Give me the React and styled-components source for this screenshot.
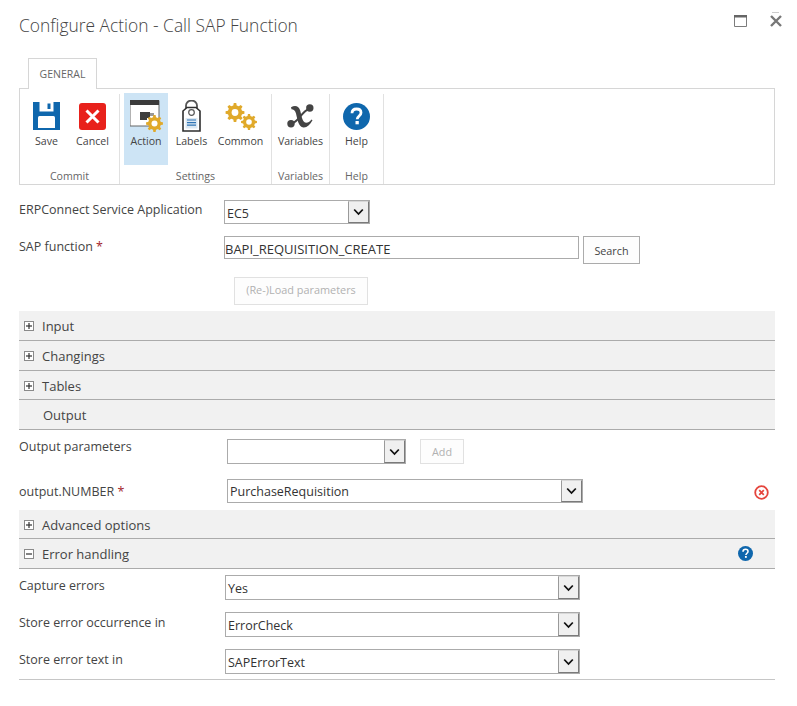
import React from 'react';
import styled, { createGlobalStyle } from 'styled-components';

const Global = createGlobalStyle`
  html, body { margin: 0; padding: 0; background: #fff; }
  body { font-family: "Open Sans", "Noto Sans", "Liberation Sans", sans-serif; color: #444; font-size: 12.5px; }
`;

const Page = styled.div`
  width: 756px;
  height: 706px;
  padding-left: 19px;
`;
const Header = styled.header`
  height: 58px;
  display: flex;
  justify-content: space-between;
  align-items: flex-start;
  margin-right: -7px;
`;
const Title = styled.h1`
  margin: 12px 0 0;
  font-size: 17.4px;
  line-height: 26px;
  font-weight: 300;
  color: #444;
`;
const WindowControls = styled.div`
  display: flex;
  align-items: flex-end;
  gap: 23px;
  margin-top: 12px;
`;
const TabStrip = styled.div`
  height: 30px;
  padding-left: 9px;
  display: flex;
`;
const Tab = styled.div`
  width: 67px;
  height: 30px;
  border: 1px solid #d6d6d6;
  border-bottom: 0;
  background: #fff;
  font-size: 10.5px;
  line-height: 30px;
  text-align: center;
  color: #666;
  position: relative;
  z-index: 1;
`;
const Ribbon = styled.div`
  height: 95px;
  border: 1px solid #d6d6d6;
  display: flex;
`;
const Group = styled.section`
  width: ${p => p.$w}px;
  margin-top: 5px;
  border-right: 1px solid #e1e1e1;
  display: flex;
  flex-direction: column;
  box-sizing: border-box;
`;
const GroupButtons = styled.div`
  height: 72px;
  margin-top: -1px;
  padding-left: ${p => p.$pad || 0}px;
  display: flex;
`;
const GroupLabel = styled.div`
  font-size: 10.6px;
  line-height: 15px;
  margin-top: 4px;
  text-align: center;
  color: #666;
`;
const RibbonButton = styled.div`
  width: ${p => p.$w}px;
  height: 72px;
  background: ${p => (p.$active ? '#cde4f5' : 'transparent')};
  display: flex;
  flex-direction: column;
  align-items: center;
  flex-shrink: 0;
`;
const IconSlot = styled.div`
  height: 40px;
  display: flex;
  align-items: center;
  justify-content: center;
  margin-top: 3px;
`;
const RibbonText = styled.div`
  font-size: 10.6px;
  line-height: 15px;
  margin-top: -2px;
  color: #444;
`;

const Row = styled.div`
  display: flex;
  align-items: flex-start;
  height: ${p => p.$h}px;
  margin-top: ${p => p.$mt || 0}px;
  padding-left: ${p => p.$pad || 0}px;
`;
const Label = styled.div`
  width: ${p => p.$w}px;
  flex-shrink: 0;
  line-height: 18px;
  margin-top: ${p => p.$top || 0}px;
  color: #444;
`;
const Req = styled.span`
  color: #a4262c;
`;
const SelectBox = styled.div`
  box-sizing: border-box;
  width: ${p => p.$w}px;
  height: ${p => p.$h}px;
  border: 1px solid #ababab;
  background: #fff;
  display: flex;
  align-items: stretch;
  flex-shrink: 0;
`;
const SelectValue = styled.div`
  flex: 1;
  padding-left: ${p => p.$pad ?? 2}px;
  font-size: 12.5px;
  line-height: ${p => p.$lh}px;
  color: #333;
`;
const SelectArrow = styled.div`
  width: 19px;
  border: 1px solid #8a8a8a;
  border-color: #d8d8d8 #7a7a7a #7a7a7a #9a9a9a;
  background: #f0f0f0;
  display: flex;
  align-items: center;
  justify-content: center;
`;
const TextInput = styled.div`
  box-sizing: border-box;
  width: 355px;
  height: 23px;
  border: 1px solid #ababab;
  line-height: 25px;
  font-size: 13px;
  color: #333;
`;
const Button = styled.div`
  box-sizing: border-box;
  width: ${p => p.$w}px;
  height: ${p => p.$h}px;
  border: 1px solid ${p => (p.$disabled ? '#e1e1e1' : '#ababab')};
  background: #fdfdfd;
  color: ${p => (p.$disabled ? '#b1b1b1' : '#444')};
  font-size: ${p => p.$fs || 10.8}px;
  line-height: ${p => p.$h - 2 + (p.$dy || 0)}px;
  text-align: center;
  margin-left: ${p => p.$ml || 0}px;
  flex-shrink: 0;
`;
const Section = styled.div`
  box-sizing: border-box;
  height: ${p => p.$h || 30}px;
  background: #f1f1f1;
  border-bottom: 1px solid #ababab;
  display: flex;
  align-items: center;
  padding-top: ${p => (p.$h === 29 ? 1 : 0)}px;
  padding-left: ${p => p.$pad || 5}px;
  padding-right: 22px;
  font-size: 13px;
  color: #444;
`;
const SectionTitle = styled.div`
  flex: 1;
  margin-left: 8px;
`;
const Toggle = styled.span`
  box-sizing: border-box;
  width: 10px;
  height: 10px;
  border: 1px solid #8a8a8a;
  background: #fff;
  position: relative;
  flex-shrink: 0;
  &::before {
    content: '';
    position: absolute;
    left: 1px;
    right: 1px;
    top: 3px;
    height: 2px;
    background: #333;
    transform: scaleY(.6);
  }
  &::after {
    content: '';
    position: absolute;
    top: 1px;
    bottom: 1px;
    left: 3px;
    width: 2px;
    background: #333;
    transform: scaleX(.6);
    display: ${p => (p.$open ? 'none' : 'block')};
  }
`;
const Spacer = styled.div`
  flex: 1;
`;
const RemoveSlot = styled.div`
  margin: 6px 6px 0 0;
`;
const BottomRule = styled.div`
  height: 1px;
  background: #c6c6c6;
`;

const Chevron = () => (
  <svg width="11" height="8" viewBox="0 0 11 8"><path d="M1.2 1.5 5.5 6 9.8 1.5" fill="none" stroke="#111" strokeWidth="1.8" /></svg>
);

const Select = ({ w, h, value, pad, lh }) => (
  <SelectBox $w={w} $h={h}>
    <SelectValue $pad={pad} $lh={lh || h}>{value}</SelectValue>
    <SelectArrow><Chevron /></SelectArrow>
  </SelectBox>
);

const Sec = ({ title, open, none, h, children }) => (
  <Section $h={h} $pad={none ? 16 : 5}>
    {!none && <Toggle $open={open} />}
    <SectionTitle>{title}</SectionTitle>
    {children}
  </Section>
);

const gearPath = (cx, cy, ro, ri, n) => {
  const pts = [];
  const step = (Math.PI * 2) / n;
  for (let i = 0; i < n; i++) {
    const a = i * step;
    [[-0.3, ri], [-0.17, ro], [0.17, ro], [0.3, ri]].forEach(([o, r]) => {
      const t = a + o * step;
      pts.push(`${(cx + r * Math.cos(t)).toFixed(2)} ${(cy + r * Math.sin(t)).toFixed(2)}`);
    });
  }
  return `M${pts.join('L')}Z`;
};
const Gear = ({ cx, cy, r, hole }) => (
  <g>
    <path d={gearPath(cx, cy, r, r * 0.76, 8)} fill="#e0a92a" />
    <circle cx={cx} cy={cy} r={hole} fill="#fff" />
  </g>
);

const SaveIcon = () => (
  <svg width="27" height="28" viewBox="0 0 27 28">
    <path d="M0 0H27V28H0Z" fill="#0f67ad" />
    <path d="M6.5 0H20.5V9.5H6.5Z" fill="#fff" />
    <path d="M14.5 1.5H17.5V7H14.5Z" fill="#0f67ad" />
    <path d="M5 15.5Q5 14 6.5 14H20.5Q22 14 22 15.5V26H5Z" fill="#fff" />
  </svg>
);
const CancelIcon = () => (
  <svg width="27" height="27" viewBox="0 0 27 27">
    <rect width="27" height="27" rx="3" fill="#e8211b" />
    <path d="M7.5 7.5 19.5 19.5M19.5 7.5 7.5 19.5" stroke="#fff" strokeWidth="3" />
  </svg>
);
const ActionIcon = () => (
  <svg width="33" height="32" viewBox="0 0 33 32">
    <path d="M0 .5H29V26H0Z" fill="#fff" stroke="#666" strokeWidth="1" />
    <path d="M0 0H29V5H0Z" fill="#3b3b3b" />
    <path d="M10 12H20V18H17V20H10Z" fill="#3d3d3d" />
    <path d="M20 13h4v3h-4z" fill="#999" />
    <Gear cx={24.5} cy={23.5} r={8.5} hole={3} />
  </svg>
);
const LabelsIcon = () => (
  <svg width="19" height="32" viewBox="0 0 19 32">
    <path d="M4 10V5.5a5.5 5 0 0 1 11 0V10" fill="none" stroke="#555" strokeWidth="1.8" />
    <path d="M1 31V11L5 7.5H14L18 11V31Z" fill="#fff" stroke="#2e2e2e" strokeWidth="1.6" />
    <circle cx="9.5" cy="12.5" r="2.8" fill="none" stroke="#555" strokeWidth="1.2" />
    <path d="M3.5 18H15.5V28.5H3.5Z" fill="#dce8f2" />
    <path d="M5 20H14M5 22.6H14M5 25.2H14" stroke="#2f74b5" strokeWidth="1.2" />
  </svg>
);
const CommonIcon = () => (
  <svg width="32" height="27" viewBox="0 0 32 27">
    <Gear cx={10} cy={9.5} r={9.5} hole={3.4} />
    <Gear cx={24} cy={19} r={8} hole={2.8} />
  </svg>
);
const VariableIcon = () => (
  <svg width="27" height="24" viewBox="0 0 27 24">
    <path d="M4 3.2C8 1 11.5 1.8 13 6C14.5 10.5 15 18.5 19 18.8C21 18.9 22.5 18 24.5 15.5L25.5 16.3C23 21 20 23.6 16.5 23.4C11.5 23.1 10.5 16 9 9.5C8.2 6.5 6.5 5.2 4.5 5.2Z" fill="#444" />
    <path d="M5 19.5C11 18.5 15 7 22 5" fill="none" stroke="#444" strokeWidth="2" />
    <circle cx="22.8" cy="4" r="3.7" fill="#444" />
    <circle cx="4" cy="19.8" r="3.7" fill="#444" />
  </svg>
);
const HelpIcon = ({ size = 27 }) => (
  <svg width={size} height={size} viewBox="0 0 27 27">
    <circle cx="13.5" cy="13.5" r="13.5" fill="#0f67ad" />
    <path d="M9 10.2C9 7.5 11 6 13.6 6C16.3 6 18 7.6 18 9.8C18 13 14.2 13 14.2 16.3" fill="none" stroke="#fff" strokeWidth="2.8" />
    <rect x="12.5" y="18" width="3.3" height="3.3" fill="#fff" />
  </svg>
);
const RemoveIcon = () => (
  <svg width="15" height="15" viewBox="0 0 15 15">
    <circle cx="7.5" cy="7.5" r="6.3" fill="#fff" stroke="#e5453d" strokeWidth="1.8" />
    <path d="M5.2 5.2 9.8 9.8M9.8 5.2 5.2 9.8" stroke="#e5453d" strokeWidth="1.7" />
  </svg>
);
const MaximizeIcon = () => (
  <svg width="13" height="12" viewBox="0 0 13 12">
    <path d="M.5.5H12.5V11.5H.5Z" fill="#fff" stroke="#7c7c7c" />
    <path d="M0 0H13V2.5H0Z" fill="#666" />
  </svg>
);
const CloseIcon = () => (
  <svg width="12" height="15" viewBox="0 0 12 15">
    <path d="M2 .5H9" stroke="#ccc" />
    <path d="M1 4 11 14M11 4 1 14" stroke="#777" strokeWidth="2.4" />
  </svg>
);

export default function App() {
  return (
    <>
      <Global />
      <Page>
        <Header>
          <Title>Configure Action - Call SAP Function</Title>
          <WindowControls>
            <MaximizeIcon />
            <CloseIcon />
          </WindowControls>
        </Header>
        <TabStrip><Tab>GENERAL</Tab></TabStrip>
        <Ribbon>
          <Group $w={100}>
            <GroupButtons $pad={4}>
              <RibbonButton $w={45}><IconSlot><SaveIcon /></IconSlot><RibbonText>Save</RibbonText></RibbonButton>
              <RibbonButton $w={47}><IconSlot><CancelIcon /></IconSlot><RibbonText>Cancel</RibbonText></RibbonButton>
            </GroupButtons>
            <GroupLabel>Commit</GroupLabel>
          </Group>
          <Group $w={152}>
            <GroupButtons $pad={4}>
              <RibbonButton $w={44} $active><IconSlot><ActionIcon /></IconSlot><RibbonText>Action</RibbonText></RibbonButton>
              <RibbonButton $w={47}><IconSlot><LabelsIcon /></IconSlot><RibbonText>Labels</RibbonText></RibbonButton>
              <RibbonButton $w={51}><IconSlot><CommonIcon /></IconSlot><RibbonText>Common</RibbonText></RibbonButton>
            </GroupButtons>
            <GroupLabel>Settings</GroupLabel>
          </Group>
          <Group $w={58}>
            <GroupButtons>
              <RibbonButton $w={57}><IconSlot><VariableIcon /></IconSlot><RibbonText>Variables</RibbonText></RibbonButton>
            </GroupButtons>
            <GroupLabel>Variables</GroupLabel>
          </Group>
          <Group $w={54}>
            <GroupButtons>
              <RibbonButton $w={53}><IconSlot><HelpIcon /></IconSlot><RibbonText>Help</RibbonText></RibbonButton>
            </GroupButtons>
            <GroupLabel>Help</GroupLabel>
          </Group>
        </Ribbon>

        <Row $h={36} $mt={15}>
          <Label $w={205} $top={1}>ERPConnect Service Application</Label>
          <Select w={146} h={24} value="EC5" lh={25} />
        </Row>
        <Row $h={41}>
          <Label $w={205} $top={2}>SAP function <Req>*</Req></Label>
          <TextInput>BAPI_REQUISITION_CREATE</TextInput>
          <Button $w={57} $h={28} $ml={4} $dy={2}>Search</Button>
        </Row>
        <Row $h={34} $pad={215}>
          <Button $w={134} $h={28} $fs={10.9} $dy={-2} $disabled>(Re-)Load parameters</Button>
        </Row>

        <Sec title="Input" />
        <Sec title="Changings" />
        <Sec title="Tables" h={29} />
        <Sec title="Output" none />

        <Row $h={40} $mt={9}>
          <Label $w={208} $top={-1}>Output parameters</Label>
          <Select w={179} h={25} value="" />
          <Button $w={44} $h={25} $ml={14} $disabled>Add</Button>
        </Row>
        <Row $h={31}>
          <Label $w={208} $top={4}>output.NUMBER <Req>*</Req></Label>
          <Select w={356} h={24} value="PurchaseRequisition" />
          <Spacer />
          <RemoveSlot><RemoveIcon /></RemoveSlot>
        </Row>
        <Sec title="Advanced options" h={29} />
        <Sec title="Error handling" open>
          <HelpIcon size={15} />
        </Sec>

        <Row $h={37} $mt={6}>
          <Label $w={206} $top={2}>Capture errors</Label>
          <Select w={355} h={25} value="Yes" lh={26} />
        </Row>
        <Row $h={37}>
          <Label $w={206} $top={2}>Store error occurrence in</Label>
          <Select w={355} h={25} value="ErrorCheck" lh={26} />
        </Row>
        <Row $h={30}>
          <Label $w={206} $top={2}>Store error text in</Label>
          <Select w={355} h={25} value="SAPErrorText" lh={26} />
        </Row>
        <BottomRule />
      </Page>
    </>
  );
}
